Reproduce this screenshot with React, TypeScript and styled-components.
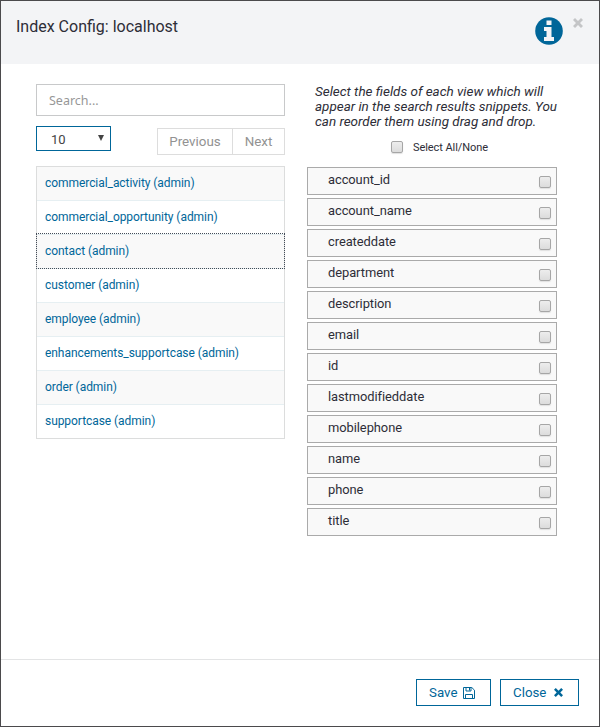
import React from "react";
import styled, { createGlobalStyle, css } from "styled-components";

const Global = createGlobalStyle`
  * { box-sizing: border-box; }
  html, body { margin: 0; background: #fff; }
  body { font-family: Roboto, "Liberation Sans", sans-serif; color: #2d2d37; overflow: hidden; }
`;

const Dialog = styled.div`
  width: 600px;
  height: 727px;
  border: 1px solid #4b4a4c;
  background: #fff;
  display: flex;
  flex-direction: column;
`;
const Header = styled.header`
  height: 63px;
  flex: none;
  background: #f3f4f6;
  display: flex;
  align-items: flex-start;
  padding: 15px 16px 0 15px;
`;
const Title = styled.h1`
  margin: 0;
  flex: 1;
  font-size: 16px;
  font-weight: 400;
  line-height: 22px;
`;
const InfoIcon = styled.svg`
  width: 28px;
  height: 28px;
  margin: 1px 10px 0 0;
`;
const Dismiss = styled.svg`
  width: 10px;
  height: 10px;
  margin: 2px 0 0;
`;
const Body = styled.main`
  flex: 1;
  display: flex;
  gap: 22px;
  padding: 20px 0 0 35px;
`;
const Views = styled.section`
  width: 249px;
`;
const Search = styled.input`
  display: block;
  width: 100%;
  height: 32px;
  border: 1px solid #c8c9ca;
  padding: 1px 12px 0;
  font: 12.5px "Noto Sans", sans-serif;
  background: #fff;
  outline: none;
  &::placeholder { color: #979797; opacity: 1; }
`;
const Controls = styled.div`
  display: flex;
  justify-content: space-between;
  align-items: flex-start;
  margin-top: 10px;
  height: 40px;
`;
const PageSize = styled.button`
  width: 75px;
  height: 25px;
  border: 1px solid #006699;
  background: #fff;
  display: flex;
  align-items: center;
  justify-content: space-between;
  padding: 2px 6px 0 14px;
  font: 13px Roboto, sans-serif;
  color: #444;
`;
const Arrow = styled.span`
  border: 3px solid transparent;
  border-top: 6px solid #444;
  border-bottom: 0;
  margin-bottom: 3px;
`;
const Pager = styled.div`
  display: flex;
  margin-top: 2px;
`;
const PageButton = styled.button<{ $w: number }>`
  width: ${(p) => p.$w}px;
  height: 27px;
  padding: 0;
  border: 1px solid #dddddd;
  background: #fff;
  font: 400 13.4px Roboto, sans-serif;
  color: #929292;
  & + & { margin-left: -1px; }
`;
const ViewList = styled.ul`
  list-style: none;
  margin: 0;
  padding: 0;
  border: 1px solid #dcdddd;
  border-bottom: 0;
`;
const ViewRow = styled.li<{ $focused?: boolean }>`
  position: relative;
  height: 34px;
  padding-left: 8px;
  border-bottom: 1px solid #e6eff2;
  font-size: 12px;
  letter-spacing: -0.06px;
  line-height: 32px;
  color: #006699;
  &:nth-child(odd) { background: #f9f9f9; }
  &:last-child { border-bottom-color: #dcdddd; }
  ${(p) => p.$focused && css`
    &::after {
      content: "";
      position: absolute;
      inset: -2px -1px -1px;
      border: 1px dotted #444c58;
    }
  `}
`;
const Fields = styled.section`
  width: 250px;
`;
const Help = styled.p`
  margin: 0 -8px 0 8px;
  font-size: 13.45px;
  font-style: italic;
  line-height: 15px;
  white-space: pre-line;
`;
const SelectAll = styled.label`
  display: flex;
  align-items: center;
  gap: 10px;
  height: 13px;
  margin: 11px 0 14px 84px;
  font-size: 11px;
  letter-spacing: -0.07px;
`;
const SelectAllText = styled.span`
  padding-top: 2px;
`;
const Checkbox = styled.input.attrs({ type: "checkbox" })`
  appearance: none;
  width: 12px;
  height: 12px;
  flex: none;
  margin: 0;
  border: 1px solid #a6a6a6;
  border-radius: 2px;
  background: linear-gradient(#ededed, #dcdcdc);
  box-shadow: 0 1px 1px #e0e0e0;
`;
const FieldList = styled.ul`
  list-style: none;
  margin: 0;
  padding: 0;
  display: grid;
  gap: 3px;
`;
const FieldRow = styled.li`
  display: flex;
  justify-content: space-between;
  height: 28px;
  padding: 0 5px 0 20px;
  border: 1px solid #aaaaaa;
  background: #f9f9f9;
  font-size: 12.9px;
  letter-spacing: -0.06px;
  line-height: 24px;
  ${Checkbox} { margin-top: 8px; }
`;
const Footer = styled.footer`
  height: 67px;
  flex: none;
  border-top: 1px solid #e3e4e5;
  display: flex;
  justify-content: flex-end;
  gap: 9px;
  padding: 19px 20px 0 0;
`;
const Action = styled.button<{ $w: number; $gap: number }>`
  width: ${(p) => p.$w}px;
  height: 27px;
  padding: 0 0 0 12px;
  border: 1px solid #006699;
  background: #fff;
  color: #006699;
  display: flex;
  align-items: center;
  gap: ${(p) => p.$gap}px;
  font: 13.3px Roboto, sans-serif;
`;

const views = [
  "commercial_activity", "commercial_opportunity", "contact", "customer",
  "employee", "enhancements_supportcase", "order", "supportcase",
];
const fields = [
  "account_id", "account_name", "createddate", "department", "description", "email",
  "id", "lastmodifieddate", "mobilephone", "name", "phone", "title",
];

function Cross() {
  return <path d="M2 0 5 3 8 0l2 2-3 3 3 3-2 2-3-3-3 3-2-2 3-3-3-3z" />;
}

function Floppy() {
  return (
    <svg width="12" height="12" viewBox="0 0 12 12" fill="none" stroke="#006699">
      <path d="M.5.5h8.3l2.7 2.7v8.3H.5z" />
      <path d="M3 .5v3.5h5V.5M2.5 11.5v-4h7v4" />
      <path d="M6.5 1v2.5" />
    </svg>
  );
}

export default function App() {
  return (
    <Dialog role="dialog">
      <Global />
      <Header>
        <Title>Index Config: localhost</Title>
        <InfoIcon viewBox="0 0 28 28">
          <circle cx="14" cy="14" r="13.8" fill="#006699" />
          <path fill="#f3f4f6" d="M11.5 3.5h5V8h-5zM9 10h7.5v10H19v4H9v-4h2.5v-6H9z" />
        </InfoIcon>
        <Dismiss viewBox="0 0 10 10" fill="#c4c5c7"><Cross /></Dismiss>
      </Header>
      <Body>
        <Views>
          <Search placeholder="Search..." />
          <Controls>
            <PageSize>10<Arrow /></PageSize>
            <Pager>
              <PageButton $w={76}>Previous</PageButton>
              <PageButton $w={53}>Next</PageButton>
            </Pager>
          </Controls>
          <ViewList>
            {views.map((v) => <ViewRow key={v} $focused={v === "contact"}>{v} (admin)</ViewRow>)}
          </ViewList>
        </Views>
        <Fields>
          <Help>{"Select the fields of each view which will\nappear in the search results snippets. You\ncan reorder them using drag and drop."}</Help>
          <SelectAll><Checkbox /><SelectAllText>Select All/None</SelectAllText></SelectAll>
          <FieldList>
            {fields.map((f) => <FieldRow key={f}>{f}<Checkbox /></FieldRow>)}
          </FieldList>
        </Fields>
      </Body>
      <Footer>
        <Action $w={75} $gap={6}>Save <Floppy /></Action>
        <Action $w={79} $gap={8}>Close <svg width="9" height="9" viewBox="0 0 10 10" fill="#006699"><Cross /></svg></Action>
      </Footer>
    </Dialog>
  );
}
